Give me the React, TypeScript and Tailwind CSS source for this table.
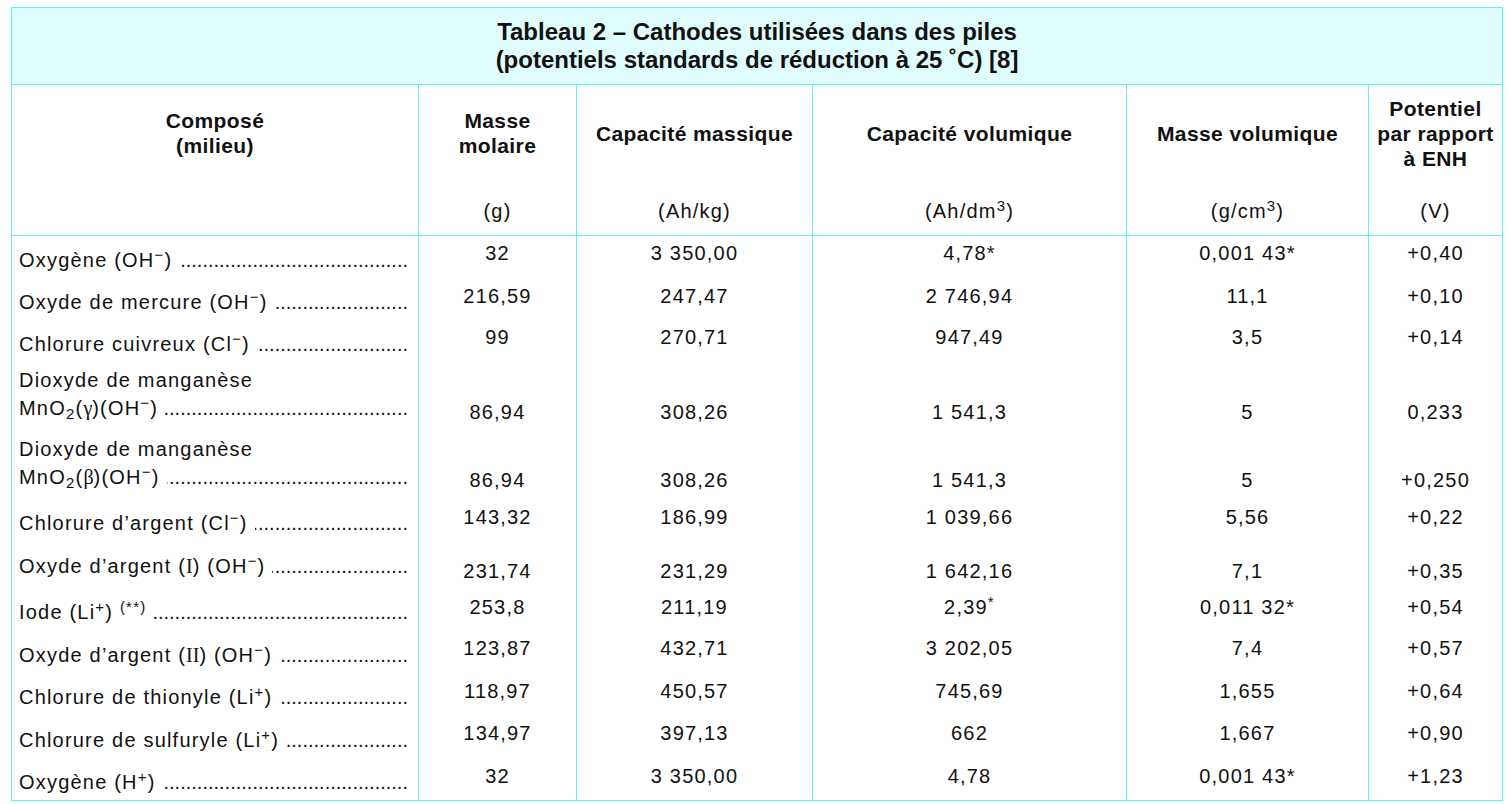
import type { ReactNode } from 'react';

type Row = {
  pre?: string;
  label: ReactNode;
  h: string;
  lp: string;
  np: string;
  dots: number;
  values: ReactNode[];
};

const Serif = ({ children }: { children: ReactNode }) => (
  <span className="font-['Liberation_Serif',serif] tracking-normal">{children}</span>
);

const rows: Row[] = [
  {
    label: <>Oxygène (OH<sup>−</sup>)</>,
    h: 'h-[42px]', lp: 'pt-[12px]', np: 'pt-[5px]', dots: 42,
    values: ['32', '3 350,00', '4,78*', '0,001 43*', '+0,40'],
  },
  {
    label: <>Oxyde de mercure (OH<sup>−</sup>)</>,
    h: 'h-[42px]', lp: 'pt-[12px]', np: 'pt-[6px]', dots: 25,
    values: ['216,59', '247,47', '2 746,94', '11,1', '+0,10'],
  },
  {
    label: <>Chlorure cuivreux (Cl<sup>−</sup>)</>,
    h: 'h-[36px]', lp: 'pt-[12px]', np: 'pt-[5px]', dots: 28,
    values: ['99', '270,71', '947,49', '3,5', '+0,14'],
  },
  {
    pre: 'Dioxyde de manganèse',
    label: <>MnO<sub>2</sub>(<Serif>γ</Serif>)(OH<sup>−</sup>)</>,
    h: 'h-[69px]', lp: 'pt-[10px]', np: 'pt-[44px]', dots: 44,
    values: ['86,94', '308,26', '1 541,3', '5', '0,233'],
  },
  {
    pre: 'Dioxyde de manganèse',
    label: <>MnO<sub>2</sub>(<Serif>β</Serif>)(OH<sup>−</sup>)</>,
    h: 'h-[74px]', lp: 'pt-[10px]', np: 'pt-[43px]', dots: 45,
    values: ['86,94', '308,26', '1 541,3', '5', '+0,250'],
  },
  {
    label: <>Chlorure d’argent (Cl<sup>−</sup>)</>,
    h: 'h-[43px]', lp: 'pt-[12px]', np: 'pt-[6px]', dots: 29,
    values: ['143,32', '186,99', '1 039,66', '5,56', '+0,22'],
  },
  {
    label: <>Oxyde d’argent (<Serif>I</Serif>) (OH<sup>−</sup>)</>,
    h: 'h-[46px]', lp: 'pt-[12px]', np: 'pt-[17px]', dots: 26,
    values: ['231,74', '231,29', '1 642,16', '7,1', '+0,35'],
  },
  {
    label: <>Iode (Li<sup>+</sup>) <sup>(**)</sup></>,
    h: 'h-[43px]', lp: 'pt-[12px]', np: 'pt-[7px]', dots: 47,
    values: ['253,8', '211,19', <>2,39<sup>*</sup></>, '0,011 32*', '+0,54'],
  },
  {
    label: <>Oxyde d’argent (<Serif>II</Serif>) (OH<sup>−</sup>)</>,
    h: 'h-[42px]', lp: 'pt-[12px]', np: 'pt-[5px]', dots: 25,
    values: ['123,87', '432,71', '3 202,05', '7,4', '+0,57'],
  },
  {
    label: <>Chlorure de thionyle (Li<sup>+</sup>)</>,
    h: 'h-[43px]', lp: 'pt-[12px]', np: 'pt-[6px]', dots: 24,
    values: ['118,97', '450,57', '745,69', '1,655', '+0,64'],
  },
  {
    label: <>Chlorure de sulfuryle (Li<sup>+</sup>)</>,
    h: 'h-[42px]', lp: 'pt-[12px]', np: 'pt-[5px]', dots: 23,
    values: ['134,97', '397,13', '662', '1,667', '+0,90'],
  },
  {
    label: <>Oxygène (H<sup>+</sup>)</>,
    h: 'h-[42px]', lp: 'pt-[12px]', np: 'pt-[6px]', dots: 45,
    values: ['32', '3 350,00', '4,78', '0,001 43*', '+1,23'],
  },
];

const cols = 'grid grid-cols-[407px_158px_236px_314px_242px_133px]';
const cell = 'border-r border-[#5cf2f5]';

const headers: { title: ReactNode; unit?: ReactNode }[] = [
  { title: <>Composé<br />(milieu)</> },
  { title: <>Masse<br />molaire</>, unit: '(g)' },
  { title: 'Capacité massique', unit: '(Ah/kg)' },
  { title: 'Capacité volumique', unit: <>(Ah/dm<sup>3</sup>)</> },
  { title: 'Masse volumique', unit: <>(g/cm<sup>3</sup>)</> },
  { title: <>Potentiel<br />par rapport<br />à ENH</>, unit: '(V)' },
];

export default function App() {
  return (
    <div className="min-h-[804px] w-[1511px] bg-white font-['Liberation_Sans',Arial,sans-serif] text-[#111]">
      <div className="ml-[11px] mt-[7px] w-[1492px] border border-[#5cf2f5]">
        {/* Title */}
        <div className="flex h-[77px] flex-col items-center justify-center border-b border-[#5cf2f5] bg-[#e0fdfd] text-[24px] font-bold leading-[28px]">
          <div>Tableau 2 – Cathodes utilisées dans des piles</div>
          <div>(potentiels standards de réduction à 25 ˚C) [8]</div>
        </div>

        {/* Header */}
        <div className={`${cols} h-[151px] border-b border-[#5cf2f5]`}>
          {headers.map((hd, i) => (
            <div key={i} className={`flex flex-col items-center ${i < 5 ? cell : ''}`}>
              <div className="flex h-[96px] items-center text-center text-[21px] font-bold leading-[25px] tracking-[0.4px]">
                <div>{hd.title}</div>
              </div>
              {hd.unit && (
                <div className="mt-[18px] text-[20px] leading-6 tracking-[1.2px]">{hd.unit}</div>
              )}
            </div>
          ))}
        </div>

        {/* Body */}
        {rows.map((r, i) => (
          <div key={i} className={`${cols} ${r.h}`}>
            <div className={`${cell} ${r.lp} pl-[7px] pr-[10px] text-[20px] tracking-[1.2px]`}>
              {r.pre && <div className="leading-[28px]">{r.pre}</div>}
              <div className={`flex ${r.pre ? 'leading-[28px]' : 'leading-6'}`}>
                <span className="whitespace-nowrap">{r.label}</span>
                <div className="ml-[7px] flex min-w-0 flex-1 justify-end overflow-hidden">
                  <span className="shrink-0 whitespace-nowrap tracking-normal">{'.'.repeat(r.dots)}</span>
                </div>
              </div>
            </div>
            {r.values.map((v, j) => (
              <div
                key={j}
                className={`${j < 4 ? cell : ''} ${r.np} text-center text-[20px] leading-6 tracking-[1.2px]`}
              >
                {v}
              </div>
            ))}
          </div>
        ))}
      </div>
    </div>
  );
}
